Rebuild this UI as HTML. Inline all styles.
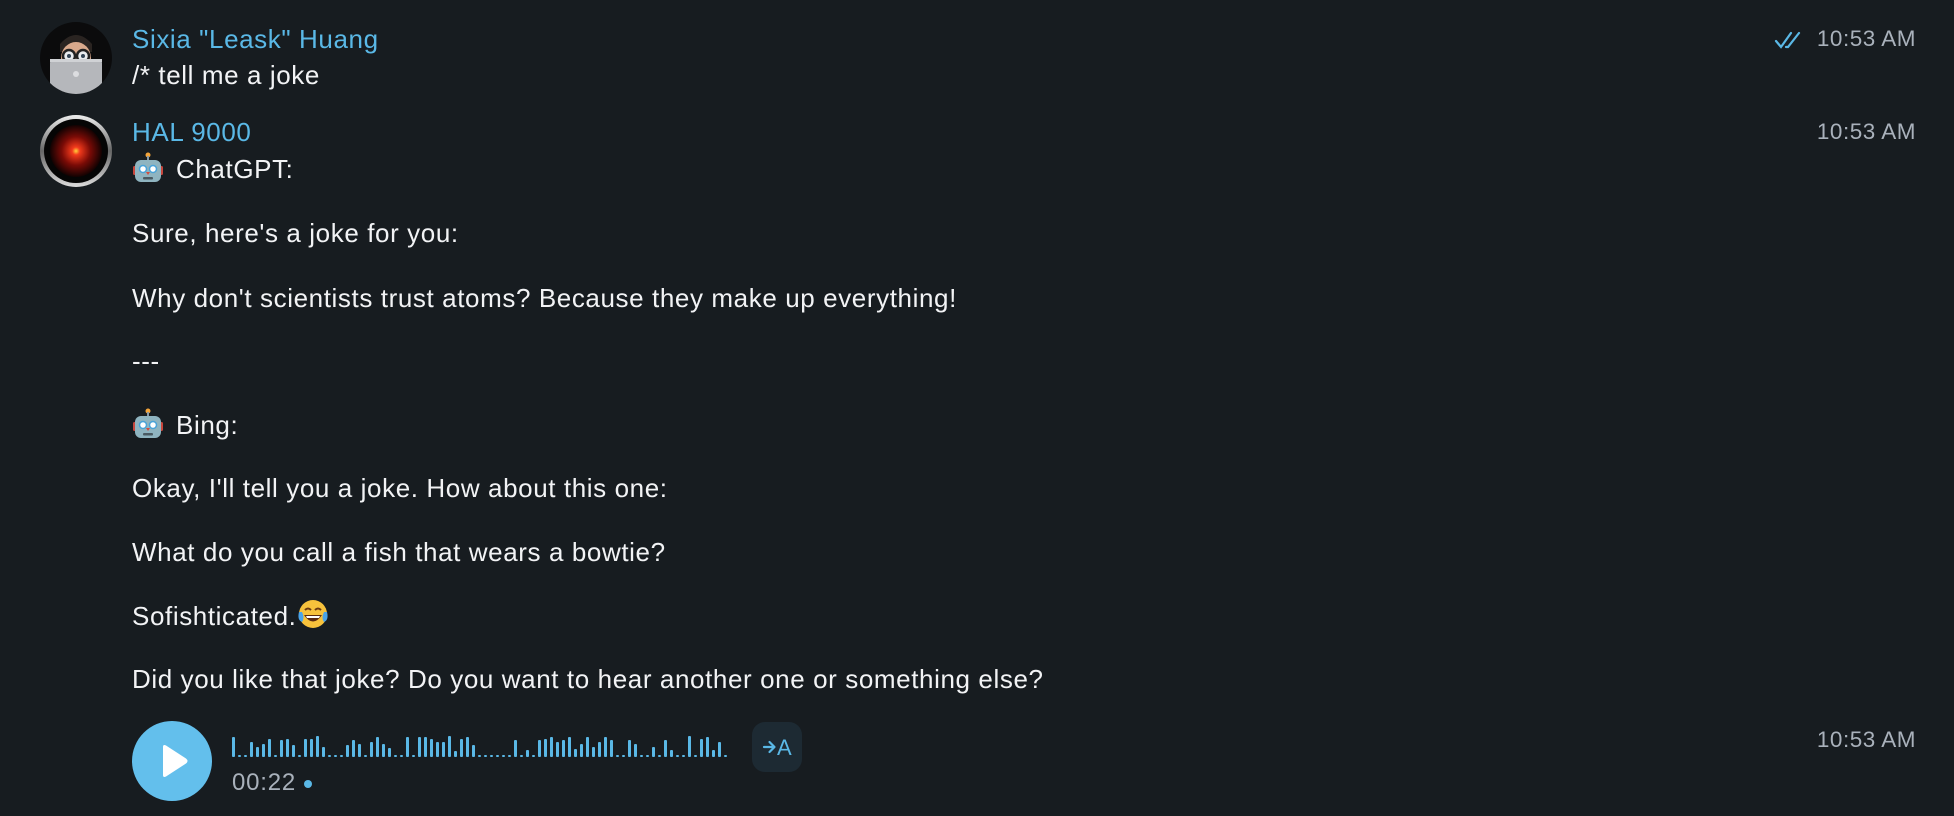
<!DOCTYPE html>
<html><head><meta charset="utf-8">
<style>
html,body{margin:0;padding:0;}
body{width:1954px;height:816px;background:#171c20;position:relative;overflow:hidden;font-family:"Liberation Sans",sans-serif;}
.t{position:absolute;left:132px;height:40px;line-height:40px;font-size:26px;letter-spacing:0.6px;color:#f2f3f5;white-space:nowrap;}
.n{color:#5ab8e6;}
.tm{position:absolute;right:38px;height:30px;line-height:30px;font-size:22.5px;letter-spacing:0.5px;color:#a9b1bb;white-space:nowrap;}
.emo{display:inline-block;vertical-align:middle;}
#wave{position:absolute;left:232px;top:735px;height:22px;display:flex;align-items:flex-end;gap:3px;}
#wave i{display:block;width:3px;background:#5ab8e6;border-radius:1px;}
</style></head><body>

<svg style="position:absolute;left:40px;top:22px" width="72" height="72" viewBox="0 0 72 72">
<circle cx="36" cy="36" r="36" fill="#0b0b0c"/>
<clipPath id="c1"><circle cx="36" cy="36" r="36"/></clipPath>
<g clip-path="url(#c1)">
<path d="M20 22 Q36 4 52 22 L52 30 L20 30Z" fill="#2a2421"/>
<ellipse cx="36" cy="36" rx="15" ry="16" fill="#d9a98c"/>
<circle cx="29" cy="34" r="6" fill="#e9ecef" stroke="#222" stroke-width="2.5"/>
<circle cx="43" cy="34" r="6" fill="#e9ecef" stroke="#222" stroke-width="2.5"/>
<circle cx="29" cy="34" r="2" fill="#345"/><circle cx="43" cy="34" r="2" fill="#345"/>
<rect x="10" y="37" width="52" height="40" rx="4" fill="#b5b7bb"/>
<rect x="10" y="37" width="52" height="3" fill="#d0d2d5"/>
<circle cx="36" cy="52" r="3" fill="#dcdde0"/>
</g></svg>

<svg style="position:absolute;left:40px;top:115px" width="72" height="72" viewBox="0 0 72 72">
<defs><radialGradient id="r" cx="50%" cy="50%" r="50%"><stop offset="0" stop-color="#ffd23a"/><stop offset="0.15" stop-color="#f23a1c"/><stop offset="0.55" stop-color="#7a0b06"/><stop offset="1" stop-color="#120202"/></radialGradient>
<linearGradient id="s" x1="0" y1="0" x2="0" y2="1"><stop offset="0" stop-color="#eee"/><stop offset="0.5" stop-color="#666"/><stop offset="1" stop-color="#ddd"/></linearGradient></defs>
<circle cx="36" cy="36" r="36" fill="url(#s)"/>
<circle cx="36" cy="36" r="32" fill="#050505"/>
<circle cx="36" cy="36" r="26" fill="url(#r)"/>
</svg>

<div class="t n" style="top:19px">Sixia "Leask" Huang</div>
<div class="t" style="top:55px">/* tell me a joke</div>

<svg style="position:absolute;left:1774px;top:30px" width="30" height="20" viewBox="0 0 30 20">
<path d="M2 11 L7 17 L17 3 M12 17 L14 17 L25 3" fill="none" stroke="#5ab8e6" stroke-width="2.2" stroke-linecap="round"/>
</svg>
<div class="tm" style="top:24px">10:53 AM</div>

<div class="t n" style="top:112px">HAL 9000</div>
<div class="tm" style="top:117px">10:53 AM</div>

<div class="t" style="top:149px"><svg class="emo" width="32" height="32" viewBox="0 0 32 32" style="margin-top:-6px;margin-right:12px"><circle cx="16" cy="3" r="2.5" fill="#f3a43a"/><rect x="15" y="4" width="2" height="5" fill="#8a9aa5"/><rect x="1" y="14" width="4" height="9" rx="1.5" fill="#c8463c"/><rect x="27" y="14" width="4" height="9" rx="1.5" fill="#c8463c"/><rect x="3" y="8" width="26" height="22" rx="6" fill="#8fb4c0"/><circle cx="11" cy="17" r="3.5" fill="#fff" stroke="#4aa3d8" stroke-width="1.5"/><circle cx="21" cy="17" r="3.5" fill="#fff" stroke="#4aa3d8" stroke-width="1.5"/><path d="M14 20 L18 20 L16 23Z" fill="#d34b3e"/><rect x="11" y="25" width="10" height="2.5" rx="1" fill="#4a5a62"/></svg>ChatGPT:</div>
<div class="t" style="top:213px">Sure, here's a joke for you:</div>
<div class="t" style="top:278px">Why don't scientists trust atoms? Because they make up everything!</div>
<div class="t" style="top:341px">---</div>
<div class="t" style="top:405px"><svg class="emo" width="32" height="32" viewBox="0 0 32 32" style="margin-top:-6px;margin-right:12px"><circle cx="16" cy="3" r="2.5" fill="#f3a43a"/><rect x="15" y="4" width="2" height="5" fill="#8a9aa5"/><rect x="1" y="14" width="4" height="9" rx="1.5" fill="#c8463c"/><rect x="27" y="14" width="4" height="9" rx="1.5" fill="#c8463c"/><rect x="3" y="8" width="26" height="22" rx="6" fill="#8fb4c0"/><circle cx="11" cy="17" r="3.5" fill="#fff" stroke="#4aa3d8" stroke-width="1.5"/><circle cx="21" cy="17" r="3.5" fill="#fff" stroke="#4aa3d8" stroke-width="1.5"/><path d="M14 20 L18 20 L16 23Z" fill="#d34b3e"/><rect x="11" y="25" width="10" height="2.5" rx="1" fill="#4a5a62"/></svg>Bing:</div>
<div class="t" style="top:468px">Okay, I'll tell you a joke. How about this one:</div>
<div class="t" style="top:532px">What do you call a fish that wears a bowtie?</div>
<div class="t" style="top:596px">Sofishticated.<svg class="emo" width="32" height="32" viewBox="0 0 32 32" style="margin-top:-8px"><circle cx="16" cy="16" r="14" fill="#f7c23c"/><path d="M8 12 Q11 9 14 12 M18 12 Q21 9 24 12" stroke="#6b3a12" stroke-width="2" fill="none"/><path d="M7 17 Q16 30 25 17Z" fill="#5a2a10"/><path d="M9 18 L23 18 L22 20 L10 20Z" fill="#fff"/><path d="M2 14 Q0 22 5 24 Q8 20 5 14Z" fill="#4aa3e8"/><path d="M30 14 Q32 22 27 24 Q24 20 27 14Z" fill="#4aa3e8"/></svg></div>
<div class="t" style="top:659px">Did you like that joke? Do you want to hear another one or something else?</div>

<svg style="position:absolute;left:132px;top:721px" width="80" height="80" viewBox="0 0 80 80">
<circle cx="40" cy="40" r="40" fill="#63bfec"/>
<path d="M31 26 Q31 23 34 24.5 L54 37.5 Q57 40 54 42.5 L34 55.5 Q31 57 31 54Z" fill="#fff"/>
</svg>
<div id="wave"></div>
<div style="position:absolute;left:232px;top:768px;height:30px;line-height:30px;font-size:24px;letter-spacing:0.8px;color:#a9b1bb;">00:22 <span style="display:inline-block;width:8px;height:8px;border-radius:4px;background:#5ab8e6;vertical-align:middle;margin-left:0px"></span></div>
<svg style="position:absolute;left:752px;top:722px" width="50" height="50" viewBox="0 0 50 50">
<rect width="50" height="50" rx="13" fill="#1d2a33"/>
<path d="M12 25 L22 25 M17.5 20 L22.5 25 L17.5 30" fill="none" stroke="#5ab8e6" stroke-width="2.2" stroke-linecap="round" stroke-linejoin="round"/>
<text x="25" y="33" font-family="Liberation Sans, sans-serif" font-size="22" fill="#5ab8e6">A</text>
</svg>
<div class="tm" style="top:725px">10:53 AM</div>

<script>
var h=[60,0,0,45,30,40,55,0,50,55,35,0,55,55,62,30,0,0,0,35,50,40,0,45,60,40,28,0,0,60,0,60,60,55,45,45,62,18,55,60,35,0,0,0,0,0,0,50,0,20,0,50,55,60,45,50,60,25,40,60,30,45,60,50,0,0,50,40,0,0,30,0,50,20,0,0,62,0,55,60,20,45,0];
var w=document.getElementById('wave');
h.forEach(function(v){var i=document.createElement('i');i.style.height=(v?Math.round(v/3):2)+'px';w.appendChild(i);});
</script>
</body></html>
